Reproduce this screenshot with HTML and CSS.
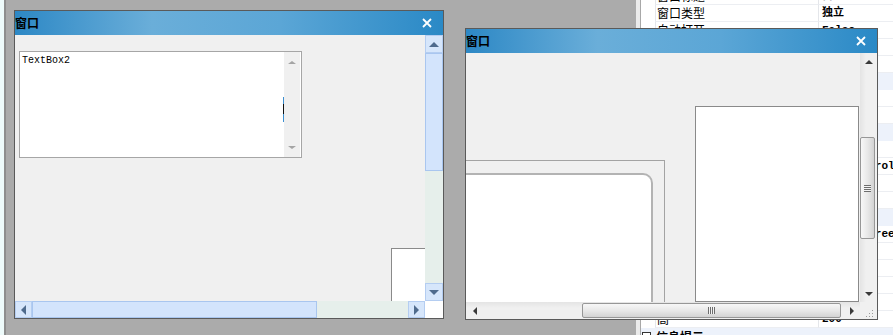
FILE: index.html
```html
<!DOCTYPE HTML>
<html>
	<head>
		<meta http-equiv="Content-Type" content="text/html; charset=UTF-8" />
		<title>窗口设计器</title>
		<link rel="stylesheet" href="styles.css">
	</head>
	<body>
		<div class="screen">
			<div class="edge"></div>
			<div class="designer"></div>
			<div class="props">
				<div class="props_edge"></div>
				<div class="grid">
					<div class="row"><span class="gut"></span><span class="name">窗口标题</span><span class="value">窗口</span></div>
					<div class="row"><span class="gut"></span><span class="name">窗口类型</span><span class="value">独立</span></div>
					<div class="row"><span class="gut"></span><span class="name">自动打开</span><span class="value">False</span></div>
					<div class="row"><span class="gut"></span><span class="name">最大化按钮</span><span class="value">True</span></div>
					<div class="row"><span class="gut"></span><span class="name">最小化按钮</span><span class="value">True</span></div>
					<div class="row cat"><span class="box"></span><span class="cat_name">外观</span></div>
					<div class="row"><span class="gut"></span><span class="name">背景颜色</span><span class="value">Control</span></div>
					<div class="row"><span class="gut"></span><span class="name">字体</span><span class="value">宋体</span></div>
					<div class="row cat"><span class="box"></span><span class="cat_name">布局</span></div>
					<div class="row"><span class="gut"></span><span class="name">左边</span><span class="value">0</span></div>
					<div class="row"><span class="gut"></span><span class="name">基类</span><span class="value">FormControl</span></div>
					<div class="row"><span class="gut"></span><span class="name">顶边</span><span class="value">0</span></div>
					<div class="row"><span class="gut"></span><span class="name">最小宽度</span><span class="value">300</span></div>
					<div class="row cat"><span class="box"></span><span class="cat_name">行为</span></div>
					<div class="row"><span class="gut"></span><span class="name">启动位置</span><span class="value">CenterScreen</span></div>
					<div class="row"><span class="gut"></span><span class="name">边框样式</span><span class="value">Sizable</span></div>
					<div class="row"><span class="gut"></span><span class="name">可见</span><span class="value">True</span></div>
					<div class="row"><span class="gut"></span><span class="name">可用</span><span class="value">True</span></div>
					<div class="row"><span class="gut"></span><span class="name">宽</span><span class="value">400</span></div>
					<div class="row"><span class="gut"></span><span class="name">高</span><span class="value">200</span></div>
					<div class="row cat"><span class="box"></span><span class="cat_name">信息提示</span></div>
				</div>
			</div>

			<!-- window 1 -->
			<div class="win win_left">
				<div class="titlebar">
					<span class="title">窗口</span>
					<svg class="close" width="10" height="10" viewBox="0 0 10 10"><path d="M1 1L9 9M9 1L1 9" stroke="#fff" stroke-width="1.8"/></svg>
				</div>
				<div class="client">
					<div class="canvas">
						<div class="textbox">
							<span class="textbox_text">TextBox2</span>
							<div class="mini_scroll">
								<span class="arr arr_up small_gray"></span>
								<span class="arr arr_down small_gray"></span>
							</div>
							<div class="caret"></div>
						</div>
						<div class="ctrl_box"></div>
					</div>
					<div class="bscroll_v">
						<div class="bbtn"><span class="arr arr_up blue"></span></div>
						<div class="bthumb"></div>
						<div class="btrack"></div>
						<div class="bbtn"><span class="arr arr_down blue"></span></div>
					</div>
					<div class="bscroll_h">
						<div class="bbtn"><span class="arr arr_left blue"></span></div>
						<div class="bthumb"></div>
						<div class="btrack"></div>
						<div class="bbtn"><span class="arr arr_right blue"></span></div>
					</div>
					<div class="corner_white"></div>
				</div>
			</div>

			<!-- window 2 -->
			<div class="win win_right">
				<div class="titlebar">
					<span class="title">窗口</span>
					<svg class="close" width="10" height="10" viewBox="0 0 10 10"><path d="M1 1L9 9M9 1L1 9" stroke="#fff" stroke-width="1.8"/></svg>
				</div>
				<div class="client">
					<div class="canvas">
						<div class="panel">
							<div class="round"></div>
						</div>
						<div class="list_box"></div>
					</div>
					<div class="cscroll_v">
						<div class="cbtn"><span class="arr arr_up dark"></span></div>
						<div class="cgap_v"></div>
						<div class="cthumb"><span class="grip_h"></span></div>
						<div class="ctrack"></div>
						<div class="cbtn"><span class="arr arr_down dark"></span></div>
					</div>
					<div class="cscroll_h">
						<div class="cbtn"><span class="arr arr_left dark"></span></div>
						<div class="cgap_h"></div>
						<div class="cthumb"><span class="grip_v"></span></div>
						<div class="ctrack"></div>
						<div class="cbtn"><span class="arr arr_right dark"></span></div>
					</div>
					<div class="corner_grip">
						<svg width="17" height="17" viewBox="0 0 17 17">
							<rect x="12" y="8" width="1" height="1" fill="#9a9a9a"/>
							<rect x="9" y="11" width="1" height="1" fill="#9a9a9a"/>
							<rect x="12" y="11" width="1" height="1" fill="#9a9a9a"/>
							<rect x="6" y="14" width="1" height="1" fill="#9a9a9a"/>
							<rect x="9" y="14" width="1" height="1" fill="#9a9a9a"/>
							<rect x="12" y="14" width="1" height="1" fill="#9a9a9a"/>
						</svg>
					</div>
				</div>
			</div>
		</div>
	</body>
</html>
```

FILE: styles.css
```css
body {
	margin: 0;
	font-family: "Noto Sans CJK SC", "Liberation Sans", sans-serif;
	font-size: 12px;
	color: #000;
}
.screen {
	position: relative;
	display: flex;
	width: 893px;
	height: 335px;
	overflow: hidden;
}
.edge {
	width: 4px;
	background: #eefbfb;
	border-right: 2px solid #8e8e8e;
}
.designer {
	flex: 1;
	background: #ababab;
}

/* property grid */
.props {
	width: 257px;
	display: flex;
	background: #fff;
}
.props_edge {
	width: 4px;
	background: #ebebeb;
	border-right: 1px solid #a8a8a8;
}
.grid {
	flex: 1;
	margin-top: -12px;
}
.row {
	display: grid;
	grid-template-columns: 14px 163px 1fr;
	height: 17px;
	overflow: hidden;
}
.row .name,
.row .value {
	border-left: 1px solid #e4e6ea;
	border-bottom: 1px solid #eceef2;
	line-height: 16px;
	white-space: nowrap;
	overflow: hidden;
}
.row .name {
	padding-left: 1px;
}
.row .value {
	padding-left: 3px;
	font-family: "Liberation Mono", "Noto Sans CJK SC", monospace;
	font-weight: bold;
	font-size: 11px;
}
.row.cat {
	display: flex;
	align-items: center;
	background: #edf2fb;
}
.box {
	width: 7px;
	height: 7px;
	border: 1px solid #333;
	margin: 0 5px 0 1px;
	background: #fff;
}
.cat_name {
	font-weight: bold;
	font-size: 12px;
	line-height: 16px;
}

/* windows */
.win {
	position: absolute;
	box-sizing: border-box;
	border: 1px solid #5a5a5a;
	display: flex;
	flex-direction: column;
	background: #f0f0f0;
}
.win_left {
	left: 14px;
	top: 10px;
	width: 430px;
	height: 309px;
}
.win_right {
	left: 465px;
	top: 28px;
	width: 413px;
	height: 292px;
}
.titlebar {
	height: 24px;
	display: flex;
	align-items: center;
	justify-content: space-between;
	background: linear-gradient(to right, #2d88c5 0%, #6aaed9 32%, #5ba6d6 62%, #2a89c6 100%);
}
.title {
	font-weight: bold;
	font-size: 12px;
	line-height: 24px;
}
.close {
	margin-right: 11px;
}
.client {
	flex: 1;
	display: grid;
}
.win_left .client {
	grid-template-columns: 410px 18px;
	grid-template-rows: 266px 17px;
}
.win_right .client {
	grid-template-columns: 394px 17px;
	grid-template-rows: 249px 17px;
}
.canvas {
	position: relative;
	overflow: hidden;
}

/* arrows */
.arr {
	width: 0;
	height: 0;
}
.arr_up.blue { border-left: 5px solid transparent; border-right: 5px solid transparent; border-bottom: 5px solid #4f6b8d; }
.arr_down.blue { border-left: 5px solid transparent; border-right: 5px solid transparent; border-top: 5px solid #4f6b8d; }
.arr_left.blue { border-top: 5px solid transparent; border-bottom: 5px solid transparent; border-right: 5px solid #4f6b8d; }
.arr_right.blue { border-top: 5px solid transparent; border-bottom: 5px solid transparent; border-left: 5px solid #4f6b8d; }
.arr_up.dark { border-left: 4px solid transparent; border-right: 4px solid transparent; border-bottom: 4px solid #3a3a3a; }
.arr_down.dark { border-left: 4px solid transparent; border-right: 4px solid transparent; border-top: 4px solid #3a3a3a; }
.arr_left.dark { border-top: 4px solid transparent; border-bottom: 4px solid transparent; border-right: 4px solid #3a3a3a; }
.arr_right.dark { border-top: 4px solid transparent; border-bottom: 4px solid transparent; border-left: 4px solid #3a3a3a; }
.arr_up.small_gray { border-left: 4px solid transparent; border-right: 4px solid transparent; border-bottom: 3px solid #a4a4a4; }
.arr_down.small_gray { border-left: 4px solid transparent; border-right: 4px solid transparent; border-top: 3px solid #a4a4a4; }

/* window 1 content */
.textbox {
	position: relative;
	box-sizing: border-box;
	width: 283px;
	height: 107px;
	margin: 16px 0 0 4px;
	border: 1px solid #a6a6a6;
	background: #fff;
	padding: 3px 0 0 2px;
	font-family: "Liberation Mono", monospace;
	font-size: 10px;
	line-height: 12px;
}
.mini_scroll {
	position: absolute;
	top: 0;
	right: 1px;
	bottom: 0;
	width: 16px;
	background: #f0f0f0;
	display: flex;
	flex-direction: column;
	justify-content: space-between;
	align-items: center;
	padding: 9px 0 8px;
	box-sizing: border-box;
}
.caret {
	position: absolute;
	right: 17px;
	top: 45px;
	width: 1px;
	height: 25px;
	background: linear-gradient(#3d8fd0 0%, #3d8fd0 30%, #111 30%, #111 70%, #3d8fd0 70%);
}
.ctrl_box {
	position: absolute;
	left: 376px;
	top: 213px;
	width: 40px;
	height: 60px;
	background: #fff;
	border-left: 1px solid #8a8a8a;
	border-top: 1px solid #8a8a8a;
}
.bscroll_v,
.bscroll_h {
	display: flex;
	background: #e6efeb;
}
.bscroll_v {
	flex-direction: column;
}
.bbtn {
	box-sizing: border-box;
	background: #d6e6fb;
	border: 1px solid #b4cdf1;
	display: flex;
	align-items: center;
	justify-content: center;
}
.bscroll_v .bbtn {
	height: 18px;
}
.bscroll_h .bbtn {
	width: 17px;
}
.bthumb {
	box-sizing: border-box;
	background: #d3e4fc;
	border: 1px solid #a9c6ef;
}
.bscroll_v .bthumb {
	height: 118px;
}
.bscroll_h .bthumb {
	width: 285px;
}
.btrack {
	flex: 1;
}
.corner_white {
	background: #fff;
}

/* window 2 content */
.panel {
	position: absolute;
	left: -40px;
	top: 107px;
	width: 239px;
	height: 200px;
	box-sizing: border-box;
	border: 1px solid #a3a3a3;
	background: #f0f0f0;
	padding: 12px 11px 0 0;
}
.round {
	height: 200px;
	background: #fff;
	border-top: 2px solid #b3b3b3;
	border-right: 2px solid #b3b3b3;
	border-top-right-radius: 10px;
}
.list_box {
	position: absolute;
	left: 229px;
	top: 53px;
	width: 164px;
	height: 196px;
	box-sizing: border-box;
	border: 1px solid #8a8a8a;
	background: #fff;
}
.cscroll_v,
.cscroll_h {
	display: flex;
	background: #eeeeee;
}
.cscroll_v {
	flex-direction: column;
	background: linear-gradient(to right, #e4e4e4, #f0f0f0 35%, #f0f0f0);
}
.cscroll_h {
	background: linear-gradient(#e4e4e4, #f0f0f0 35%, #f0f0f0);
}
.cbtn {
	display: flex;
	align-items: center;
	justify-content: center;
}
.cscroll_v .cbtn {
	height: 17px;
}
.cscroll_h .cbtn {
	width: 17px;
}
.cgap_v {
	height: 67px;
}
.cgap_h {
	width: 99px;
}
.cthumb {
	box-sizing: border-box;
	border: 1px solid #979797;
	border-radius: 2px;
	display: flex;
	align-items: center;
	justify-content: center;
}
.cscroll_v .cthumb {
	height: 102px;
	margin-right: 2px;
	background: linear-gradient(to right, #f7f7f7, #e8e8e8 50%, #d3d3d3);
}
.cscroll_h .cthumb {
	width: 259px;
	margin: 1px 0;
	background: linear-gradient(#f7f7f7, #e8e8e8 50%, #d3d3d3);
}
.ctrack {
	flex: 1;
}
.grip_h {
	width: 7px;
	height: 7px;
	background: repeating-linear-gradient(#6d6d6d 0, #6d6d6d 1px, #f4f4f4 1px, #f4f4f4 2px);
}
.grip_v {
	width: 7px;
	height: 7px;
	background: repeating-linear-gradient(to right, #6d6d6d 0, #6d6d6d 1px, #f4f4f4 1px, #f4f4f4 2px);
}
.corner_grip {
	background: #f0f0f0;
}
```
